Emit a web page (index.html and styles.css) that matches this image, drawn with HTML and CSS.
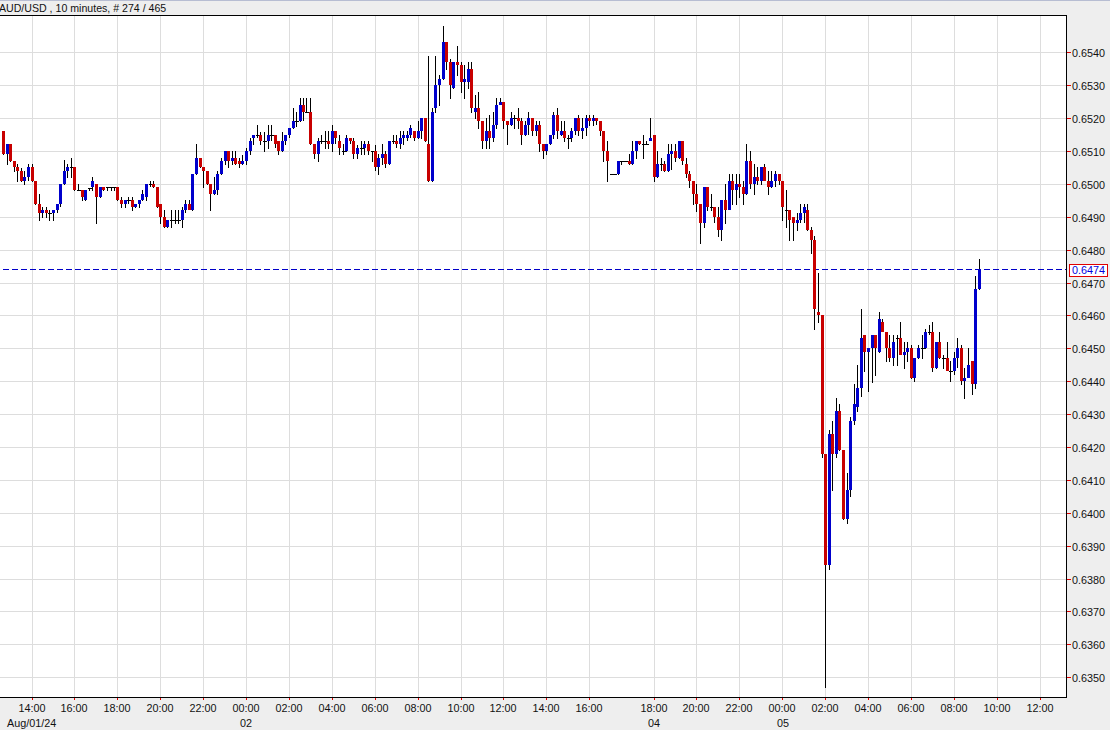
FILE: index.html
```html
<!DOCTYPE html>
<html lang="en">
<head>
<meta charset="utf-8">
<title>AUD/USD chart</title>
<link rel="stylesheet" href="styles.css">
</head>
<body>
<main class="app">
  <header class="title"><span class="title-text">AUD/USD , 10 minutes, # 274 / 465</span></header>
  <svg class="chart" viewBox="0 15 1110 715" width="1110" height="715" xmlns="http://www.w3.org/2000/svg">
    <rect class="plot" x="0" y="15" width="1066" height="682"/>
    <path class="grid" d="M0 52.5H1066M0 85.5H1066M0 118.5H1066M0 151.5H1066M0 184.5H1066M0 217.5H1066M0 250.5H1066M0 283.5H1066M0 315.5H1066M0 348.5H1066M0 381.5H1066M0 414.5H1066M0 447.5H1066M0 480.5H1066M0 513.5H1066M0 546.5H1066M0 579.5H1066M0 611.5H1066M0 644.5H1066M0 677.5H1066"/>
    <path class="grid" d="M32.5 15V697M74.5 15V697M117.5 15V697M160.5 15V697M203.5 15V697M246.5 15V697M289.5 15V697M332.5 15V697M375.5 15V697M418.5 15V697M461.5 15V697M503.5 15V697M546.5 15V697M589.5 15V697M654.5 15V697M696.5 15V697M739.5 15V697M782.5 15V697M825.5 15V697M868.5 15V697M911.5 15V697M954.5 15V697M997.5 15V697M1040.5 15V697"/>
    <path class="last-line" d="M3 269.5H1066"/>
    <g id="candles"></g>
    <path class="frame" d="M0 15.5H1066.5V697.5H0"/>
    <path class="tick" d="M1067 52.5H1071M1067 85.5H1071M1067 118.5H1071M1067 151.5H1071M1067 184.5H1071M1067 217.5H1071M1067 250.5H1071M1067 283.5H1071M1067 315.5H1071M1067 348.5H1071M1067 381.5H1071M1067 414.5H1071M1067 447.5H1071M1067 480.5H1071M1067 513.5H1071M1067 546.5H1071M1067 579.5H1071M1067 611.5H1071M1067 644.5H1071M1067 677.5H1071"/>
    <path class="tick" d="M32.5 698V700M74.5 698V700M117.5 698V700M160.5 698V700M203.5 698V700M246.5 698V700M289.5 698V700M332.5 698V700M375.5 698V700M418.5 698V700M461.5 698V700M503.5 698V700M546.5 698V700M589.5 698V700M654.5 698V700M696.5 698V700M739.5 698V700M782.5 698V700M825.5 698V700M868.5 698V700M911.5 698V700M954.5 698V700M997.5 698V700M1040.5 698V700"/>
    <g class="price-labels">
      <text x="1072" y="57">0.6540</text><text x="1072" y="90">0.6530</text><text x="1072" y="123">0.6520</text><text x="1072" y="156">0.6510</text><text x="1072" y="189">0.6500</text><text x="1072" y="222">0.6490</text><text x="1072" y="255">0.6480</text><text x="1072" y="288">0.6470</text><text x="1072" y="320">0.6460</text><text x="1072" y="353">0.6450</text><text x="1072" y="386">0.6440</text><text x="1072" y="419">0.6430</text><text x="1072" y="452">0.6420</text><text x="1072" y="485">0.6410</text><text x="1072" y="518">0.6400</text><text x="1072" y="551">0.6390</text><text x="1072" y="584">0.6380</text><text x="1072" y="616">0.6370</text><text x="1072" y="649">0.6360</text><text x="1072" y="682">0.6350</text>
    </g>
    <rect class="last-box" x="1069.5" y="264.5" width="38" height="12"/>
    <text class="last-text" x="1072" y="274">0.6474</text>
    <g class="time-labels">
      <text x="32" y="712">14:00</text><text x="74" y="712">16:00</text><text x="117" y="712">18:00</text><text x="160" y="712">20:00</text><text x="203" y="712">22:00</text><text x="246" y="712">00:00</text><text x="289" y="712">02:00</text><text x="332" y="712">04:00</text><text x="375" y="712">06:00</text><text x="418" y="712">08:00</text><text x="461" y="712">10:00</text><text x="503" y="712">12:00</text><text x="546" y="712">14:00</text><text x="589" y="712">16:00</text><text x="654" y="712">18:00</text><text x="696" y="712">20:00</text><text x="739" y="712">22:00</text><text x="782" y="712">00:00</text><text x="825" y="712">02:00</text><text x="868" y="712">04:00</text><text x="911" y="712">06:00</text><text x="954" y="712">08:00</text><text x="997" y="712">10:00</text><text x="1040" y="712">12:00</text>
    </g>
    <g class="date-labels">
      <text x="7" y="727">Aug/01/24</text><text x="240" y="727">02</text><text x="648" y="727">04</text><text x="777" y="727">05</text>
    </g>
  </svg>
</main>
<script src="chart.js"></script>
</body>
</html>
```
FILE: styles.css
```css
html, body {
  margin: 0;
  padding: 0;
  background: #eeeeee;
  overflow: hidden;
}
.app {
  display: flex;
  flex-direction: column;
  width: 1110px;
  height: 730px;
  background: #eeeeee;
  font-family: "Liberation Sans", Arial, sans-serif;
}
.title {
  box-sizing: border-box;
  height: 15px;
  border-top: 1px solid #b7bdd2;
  background: #eeeeee;
  font-size: 10.6px;
  line-height: 14px;
  color: #111111;
  white-space: nowrap;
  overflow: hidden;
}
.title-text {
  display: block;
  margin-left: -1px;
}
.chart {
  display: block;
  flex: none;
}
.chart text {
  font-family: "Liberation Sans", Arial, sans-serif;
  font-size: 10.8px;
  fill: #111111;
}
.plot { fill: #ffffff; }
.grid {
  fill: none;
  stroke: #dddddd;
  stroke-width: 1;
  shape-rendering: crispEdges;
}
.last-line {
  fill: none;
  stroke: #0000c8;
  stroke-width: 1;
  stroke-dasharray: 6 3;
  shape-rendering: crispEdges;
}
.frame {
  fill: none;
  stroke: #000000;
  stroke-width: 1;
  shape-rendering: crispEdges;
}
.tick {
  fill: none;
  stroke: #e00000;
  stroke-width: 1;
  shape-rendering: crispEdges;
}
.time-labels text { text-anchor: middle; }
.last-box {
  fill: #ffffff;
  stroke: #e00000;
  stroke-width: 1;
  shape-rendering: crispEdges;
}
.chart .last-text { fill: #0000e0; }
.wick { fill: #000000; shape-rendering: crispEdges; }
.body-r { fill: #c80000; shape-rendering: crispEdges; }
.body-b { fill: #0000cc; shape-rendering: crispEdges; }
.body-d { fill: #000000; shape-rendering: crispEdges; }
```
FILE: chart.js
```js
// x, colour (r=down, b=up, d=doji), wick top, body top, body bottom, wick bottom
var rows = [
[3,'r',131,131,154,155],[7,'b',144,144,154,165],[10,'r',144,144,161,162],[14,'r',161,161,167,172],[17,'r',164,167,171,182],[21,'r',168,171,181,182],[24,'b',171,177,181,185],[28,'b',164,167,177,181],[32,'r',164,167,181,182],[35,'r',181,181,204,205],
[39,'r',194,204,213,221],[42,'b',207,210,213,218],[46,'r',207,210,213,218],[49,'d',210,213,213,221],[53,'b',210,210,213,221],[57,'b',204,204,210,213],[60,'b',184,184,204,207],[64,'b',160,171,184,185],[67,'b',164,167,171,178],[71,'d',158,167,167,178],
[74,'r',167,167,190,191],[78,'d',184,190,190,190],[82,'r',190,190,197,201],[85,'b',190,190,200,201],[89,'d',188,188,188,191],[92,'b',177,181,187,191],[96,'r',184,184,197,224],[100,'b',187,187,197,198],[103,'r',187,187,190,191],[107,'d',187,187,187,191],
[111,'d',187,187,187,191],[114,'d',187,187,187,191],[117,'r',187,187,200,201],[121,'r',197,200,204,208],[125,'b',200,200,204,208],[128,'d',197,200,200,204],[132,'r',197,200,207,211],[135,'b',204,204,207,208],[139,'b',200,200,204,208],[142,'b',190,194,200,201],
[146,'b',184,184,197,201],[150,'d',181,184,184,187],[153,'r',181,184,187,188],[157,'r',187,187,207,208],[160,'r',204,204,217,224],[164,'r',210,217,227,228],[167,'b',220,220,227,228],[171,'d',210,220,220,228],[175,'d',210,220,220,224],[178,'d',210,220,220,224],
[182,'b',207,210,220,228],[185,'b',200,204,210,213],[189,'r',200,204,210,210],[192,'b',174,174,210,211],[196,'b',144,158,174,175],[200,'r',158,158,167,168],[203,'r',167,167,171,188],[207,'r',171,171,184,185],[210,'r',184,184,194,211],[214,'b',177,190,194,195],
[217,'b',171,174,190,195],
[221,'b',158,161,174,175],[225,'b',151,151,161,165],[228,'r',151,151,161,168],[232,'b',151,158,161,165],[235,'r',151,158,164,165],[239,'r',158,161,164,168],[242,'b',155,161,164,165],[246,'b',148,151,161,165],[250,'b',138,141,151,155],[253,'b',135,135,138,145],
[257,'d',125,135,135,138],[260,'r',132,135,141,145],[264,'d',132,141,141,152],[268,'b',125,135,141,149],[271,'d',125,135,135,141],[275,'r',135,135,144,148],[278,'r',141,141,151,155],[282,'b',132,141,151,152],[285,'b',135,135,141,145],[289,'b',128,128,135,138],
[293,'b',108,121,128,129],[296,'d',112,121,121,127],[300,'b',98,105,121,122],[303,'r',98,105,112,121],[306,'d',98,112,112,112],[310,'r',98,112,144,145],[314,'r',144,144,154,159],[318,'b',138,141,154,162],[321,'d',135,141,141,144],[325,'d',131,141,141,149],
[328,'r',131,141,144,149],[332,'b',125,131,144,152],[335,'r',131,131,138,144],[339,'r',135,141,148,155],[343,'d',144,151,151,155],[346,'b',135,138,151,152],[350,'r',138,138,141,144],[353,'r',138,141,154,159],[357,'b',145,148,154,159],[361,'d',141,148,148,155],
[364,'b',141,144,148,155],[368,'r',141,144,151,155],[372,'d',151,151,151,162],[375,'r',145,151,167,171],[378,'b',154,158,167,175],[382,'b',144,154,158,165],[385,'r',151,154,164,168],[389,'b',141,141,164,165],[393,'d',135,141,141,144],[396,'r',135,141,144,148],
[400,'b',131,138,144,149],[403,'b',131,135,138,145],[407,'b',131,135,138,141],[410,'b',125,128,135,138],[414,'r',131,131,138,141],[418,'b',121,131,138,139],
[421,'b',118,118,131,139],[425,'r',118,118,141,142],[428,'r',56,144,181,182],[432,'b',108,112,181,182],[435,'b',56,85,108,113],[439,'b',75,79,85,106],[443,'b',26,42,79,80],[446,'r',42,42,62,70],[450,'r',59,62,85,99],[453,'b',62,62,88,89],
[457,'r',46,62,65,76],[461,'r',62,65,82,93],[464,'b',65,79,82,99],[468,'b',62,69,82,89],[471,'r',62,69,108,113],[475,'b',95,108,112,119],[478,'r',92,108,121,129],[482,'r',121,121,141,149],[486,'b',118,131,141,149],[489,'r',115,131,138,149],
[493,'b',112,125,138,142],[496,'b',98,105,125,129],[500,'b',98,102,105,105],[503,'r',102,102,121,129],[507,'r',121,121,125,145],[511,'b',112,118,125,126],[514,'d',115,118,118,129],[518,'r',108,118,121,129],[521,'r',118,121,135,145],[525,'b',121,125,135,136],
[528,'b',112,118,125,135],[532,'r',118,118,131,136],[536,'b',121,125,131,136],[539,'r',121,125,144,152],[543,'r',144,144,151,159],[546,'b',144,144,151,155],[550,'b',135,135,144,145],[553,'b',112,115,135,139],[557,'r',108,115,131,139],[561,'b',121,131,135,136],
[564,'r',121,131,138,142],[568,'d',135,138,138,149],[571,'b',128,131,138,142],[575,'b',118,118,131,135],[578,'r',115,118,131,136],[582,'b',118,128,131,139],[586,'b',115,118,128,136],[589,'r',115,118,121,126],[593,'b',115,118,121,126],[596,'r',118,118,121,125],
[600,'r',121,121,131,136],
[603,'r',131,131,151,162],[607,'r',141,151,161,182],[611,'d',174,174,174,174],[614,'d',174,174,174,174],[618,'b',161,161,174,175],[621,'d',161,161,161,165],[625,'d',161,161,161,161],[629,'r',154,161,164,165],[632,'b',141,151,164,165],[636,'b',141,141,151,159],
[639,'r',141,141,144,145],[643,'d',135,144,144,159],[646,'d',141,144,144,145],[650,'b',118,138,141,141],[654,'r',135,135,177,182],[657,'b',151,164,177,178],[661,'d',158,164,164,171],[664,'r',161,164,171,172],[668,'b',144,154,171,172],[671,'b',144,151,154,170],
[675,'r',144,151,158,162],[679,'b',141,141,158,159],[682,'r',141,141,161,165],[686,'r',158,164,174,178],[689,'r',171,174,181,188],[693,'r',181,181,194,205],[696,'r',184,194,204,212],[700,'r',204,204,223,244],[704,'b',187,187,223,228],[707,'r',187,187,207,211],
[711,'d',194,207,207,211],[714,'r',207,207,217,223],[718,'r',207,217,230,237],[721,'b',200,200,230,241],[725,'r',184,200,210,224],[729,'b',174,181,210,210],[732,'r',174,181,190,205],[736,'b',174,184,190,205],[739,'r',174,184,187,198],[743,'r',181,187,194,205],
[746,'b',144,161,194,195],[750,'r',151,161,184,189],[754,'b',164,177,184,195],[757,'r',167,177,181,185],[761,'b',167,167,181,185],[764,'r',164,167,181,181],[768,'r',171,181,187,195],[771,'b',171,181,187,188],[775,'b',171,174,181,187],[779,'r',174,174,181,185],
[782,'r',181,181,207,221],[786,'d',190,210,210,228],[789,'r',210,210,220,241],
[793,'r',217,217,223,241],[797,'b',213,220,223,231],[800,'b',204,213,220,223],[804,'b',204,207,213,223],[807,'r',204,210,230,231],[811,'r',227,230,240,254],[814,'r',236,240,309,330],[818,'r',273,312,315,323],[822,'r',315,315,454,458],[825,'r',454,454,565,688],
[829,'b',430,434,565,570],[832,'r',421,434,454,491],[836,'b',398,411,454,458],[839,'r',404,411,450,451],[843,'r',450,450,519,520],[847,'b',473,490,519,524],[850,'b',417,421,490,497],[854,'b',384,404,421,425],[857,'b',365,388,407,412],[861,'b',309,338,388,397],
[864,'r',335,335,352,372],[868,'b',348,348,352,392],[872,'b',335,335,348,383],[875,'r',335,335,348,376],[879,'b',312,319,352,353],[882,'r',319,322,332,332],[886,'r',332,332,348,362],[889,'r',335,348,358,362],[893,'b',335,342,358,366],[897,'d',335,338,338,366],
[900,'r',322,338,355,355],[904,'b',342,352,355,369],[907,'b',342,348,352,362],[911,'r',345,348,378,379],[914,'b',358,358,378,382],[918,'b',345,348,358,359],[922,'d',335,348,348,359],[925,'b',329,332,348,349],[929,'d',325,332,332,335],[932,'r',322,332,368,372],
[936,'b',342,342,368,369],[939,'r',332,342,358,359],[943,'d',355,358,358,369],[947,'r',342,358,371,371],[950,'d',361,371,371,382],[954,'b',352,358,371,375],[957,'b',338,348,358,368],[961,'r',345,348,381,385],[964,'b',368,378,381,399],[968,'b',348,365,378,378],
[972,'r',361,361,384,395],[975,'b',276,289,384,389],[979,'b',259,269,289,290]
];
var NS = 'http://www.w3.org/2000/svg';
var group = document.getElementById('candles');
function rect(cls, x, y, w, h) {
  var r = document.createElementNS(NS, 'rect');
  r.setAttribute('class', cls);
  r.setAttribute('x', x);
  r.setAttribute('y', y);
  r.setAttribute('width', w);
  r.setAttribute('height', h);
  group.appendChild(r);
}
rows.forEach(function (c) {
  rect('wick', c[0], c[2], 1, Math.max(1, c[5] - c[2]));
  rect('body-' + c[1], c[0] - 1, c[3], c[1] === 'd' ? 4 : 3, Math.max(1, c[4] - c[3]));
});
```
